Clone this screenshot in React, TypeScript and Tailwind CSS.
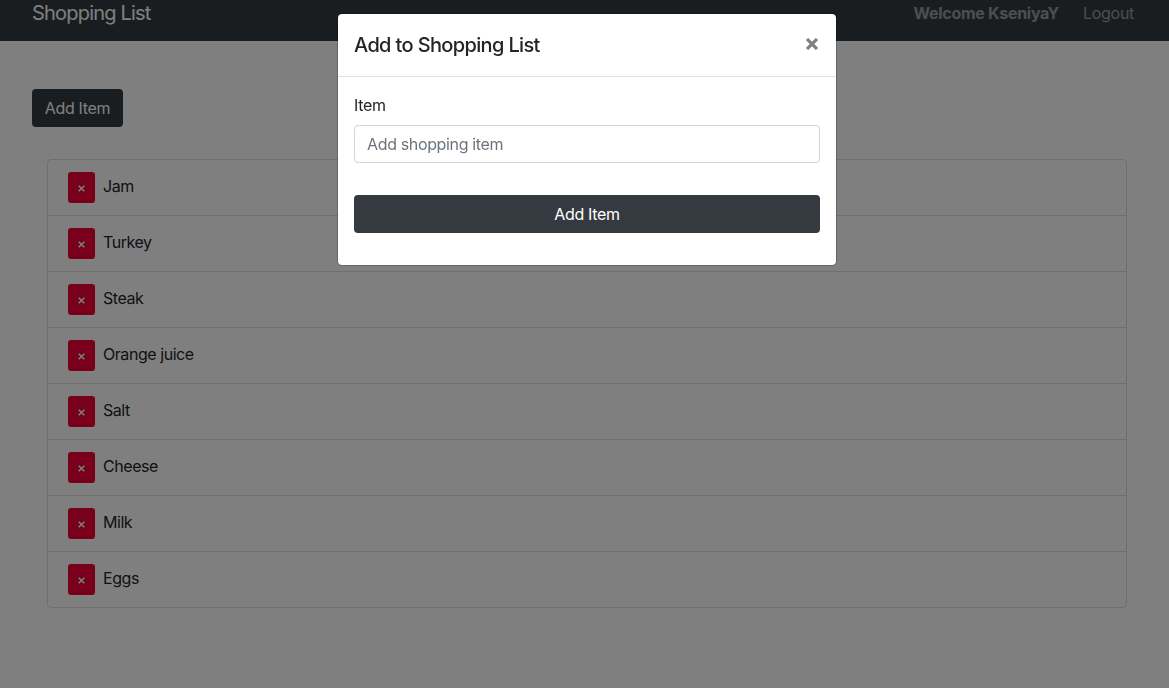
const items = ['Jam', 'Turkey', 'Steak', 'Orange juice', 'Salt', 'Cheese', 'Milk', 'Eggs'];

function Navbar() {
  return (
    <nav className="flex h-[41px] items-start justify-between bg-[#343a40] pl-8 pr-[35px]">
      <a className="-mt-0.5 text-xl leading-[30px] tracking-[-0.04em] text-white">Shopping List</a>
      <div className="flex gap-6 pt-px leading-6 text-white/50">
        <strong className="font-bold tracking-[-0.018em]">Welcome KseniyaY</strong>
        <a className="tracking-[-0.018em]">Logout</a>
      </div>
    </nav>
  );
}

function ShoppingList() {
  return (
    <ul className="mx-[15px] mt-8 divide-y divide-[#dfdfdf] rounded border border-[#dfdfdf]">
      {items.map((name) => (
        <li key={name} className="flex h-14 items-start px-5 pt-3 last:h-[55px]">
          <button className="mr-2 flex h-[31px] w-[27px] items-center justify-center rounded-[3px] bg-[#f00037] text-white">
            <svg className="mt-0.5" width="7" height="7" viewBox="0 0 7 7" stroke="currentColor" strokeWidth="1.5">
              <path d="M0.7 0.7L6.3 6.3M6.3 0.7L0.7 6.3" />
            </svg>
          </button>
          <span className="pt-0.5 leading-6 tracking-[-0.028em]">{name}</span>
        </li>
      ))}
    </ul>
  );
}

function AddItemModal() {
  return (
    <div className="fixed inset-0 flex items-start bg-black/50 pl-[337px] pt-[13px]">
      <div role="dialog" className="h-[253px] w-[500px] rounded-[5px] border border-black/20 bg-white bg-clip-padding">
        <header className="flex h-[63px] items-start justify-between border-b border-[#dee2e6] px-4 pt-4">
          <h5 className="text-xl font-medium leading-[30px] tracking-[-0.032em]">Add to Shopping List</h5>
          <button aria-label="Close" className="mr-0.5 mt-2 text-[#808080]">
            <svg width="12" height="12" viewBox="0 0 12 12" stroke="currentColor" strokeWidth="3.2">
              <path d="M1 1L11 11M11 1L1 11" />
            </svg>
          </button>
        </header>
        <form className="flex flex-col px-4 pt-4">
          <label htmlFor="item" className="leading-6 tracking-[-0.022em]">Item</label>
          <input
            id="item"
            placeholder="Add shopping item"
            className="mt-2 h-[38px] rounded border border-[#ced4da] px-3 tracking-[-0.022em] placeholder:text-[#6c757d]"
          />
          <button type="button" className="mt-8 h-[38px] rounded bg-[#343a40] tracking-[-0.022em] text-white">Add Item</button>
        </form>
      </div>
    </div>
  );
}

export default function App() {
  return (
    <div className="h-[688px] overflow-hidden bg-white font-['Inter',sans-serif] text-base text-[#212529]">
      <Navbar />
      <main className="px-8 pr-[27px] pt-12">
        <button className="block h-[38px] w-[91px] rounded bg-[#343a40] tracking-[-0.022em] text-white">Add Item</button>
        <ShoppingList />
      </main>
      <AddItemModal />
    </div>
  );
}
